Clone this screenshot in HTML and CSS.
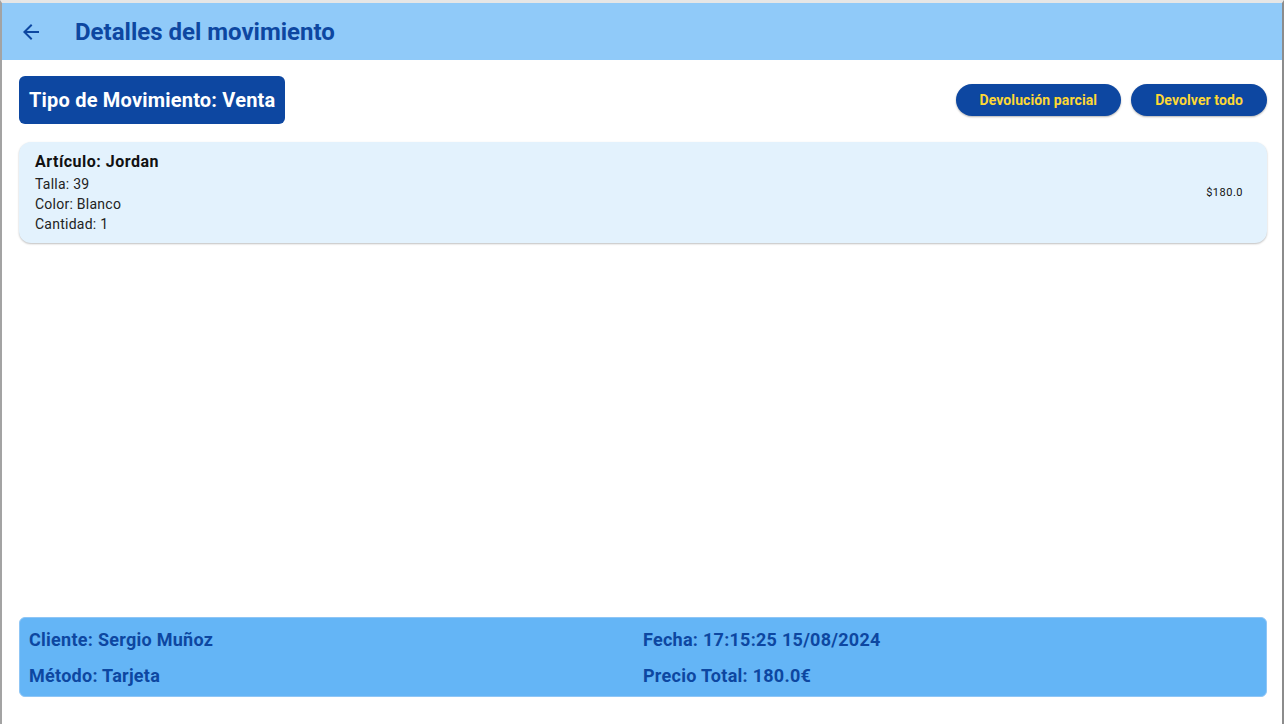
FILE: index.html
```html
<!DOCTYPE html>
<html lang="es">
<head>
<meta charset="utf-8">
<title>Detalles del movimiento</title>
<link rel="stylesheet" href="styles.css">
</head>
<body>
<div class="window">
  <header class="appbar">
    <button class="back" aria-label="Volver">
      <svg width="24" height="24" viewBox="0 0 24 24"><path d="M20 11H7.83l5.59-5.59L12 4l-8 8 8 8 1.41-1.41L7.83 13H20v-2z" fill="#0d47a1"/></svg>
    </button>
    <h1 class="title">Detalles del movimiento</h1>
  </header>
  <main class="content">
    <div class="toprow">
      <div class="tipo">Tipo de Movimiento: Venta</div>
      <div class="actions">
        <button class="pill">Devolución parcial</button>
        <button class="pill">Devolver todo</button>
      </div>
    </div>
    <div class="item">
      <div class="item-info">
        <div class="item-name">Artículo: Jordan</div>
        <div class="item-line">Talla: 39</div>
        <div class="item-line">Color: Blanco</div>
        <div class="item-line">Cantidad: 1</div>
      </div>
      <div class="item-price">$180.0</div>
    </div>
    <div class="spacer"></div>
    <div class="summary">
      <div class="sum">Cliente: Sergio Muñoz</div>
      <div class="sum">Fecha: 17:15:25 15/08/2024</div>
      <div class="sum">Método: Tarjeta</div>
      <div class="sum">Precio Total: 180.0€</div>
    </div>
  </main>
</div>
</body>
</html>
```

FILE: styles.css
```css
* { box-sizing: border-box; }
html, body { margin: 0; padding: 0; }
body {
  width: 1284px;
  height: 724px;
  overflow: hidden;
  font-family: Roboto, "Noto Sans", sans-serif;
  background: #fff;
}
.window {
  height: 724px;
  display: flex;
  flex-direction: column;
  border-top: 3px solid #e6e6e6;
  border-left: 2px solid #a3a3a3;
  border-right: 2px solid #8c8c8c;
  background: #fff;
}
.appbar {
  height: 57px;
  flex: none;
  background: #90caf9;
  display: flex;
  align-items: center;
  padding-left: 17px;
}
.back {
  border: 0;
  background: none;
  padding: 0;
  width: 24px;
  height: 24px;
  display: flex;
  margin-top: 1px;
}
.title {
  margin: 0 0 0 32px;
  font-size: 24px;
  font-weight: 700;
  color: #0d47a1;
  letter-spacing: 0;
}
.content {
  flex: 1;
  display: flex;
  flex-direction: column;
  padding: 16px 15px 27px 17px;
}
.toprow {
  display: flex;
  justify-content: space-between;
  align-items: center;
}
.tipo {
  background: #0d47a1;
  color: #fff;
  font-size: 20px;
  font-weight: 700;
  letter-spacing: 0.2px;
  height: 48px;
  display: flex;
  align-items: center;
  padding: 0 10px;
  border-radius: 6px;
}
.actions { display: flex; gap: 10px; }
.pill {
  height: 32px;
  border: 0;
  border-radius: 16px;
  background: #0d47a1;
  color: #fdd835;
  font-family: Roboto, sans-serif;
  font-size: 14px;
  font-weight: 700;
  letter-spacing: 0.1px;
  padding: 0 24px;
  box-shadow: 0 1px 2px rgba(0,0,0,0.3);
}
.item {
  margin-top: 18px;
  background: #e3f2fd;
  border-radius: 12px;
  box-shadow: 0 1px 2px rgba(0,0,0,0.25);
  display: flex;
  align-items: center;
  justify-content: space-between;
  padding: 8px 24px 9px 16px;
  height: 101px;
}
.item-name {
  font-size: 16px;
  font-weight: 700;
  color: #111;
  line-height: 22px;
  letter-spacing: 0.5px;
  margin-bottom: 1px;
}
.item-line {
  font-size: 14px;
  color: #222;
  line-height: 20px;
  letter-spacing: 0.25px;
}
.item-price {
  font-size: 11px;
  color: #111;
  letter-spacing: 0.5px;
}
.spacer { flex: 1; }
.summary {
  background: #64b5f6;
  border: 1.5px solid #8fc6f6;
  border-radius: 6px;
  display: grid;
  grid-template-columns: 1fr 1fr;
  row-gap: 0;
  padding: 5px 9px 3px;
  height: 80px;
  align-content: center;
}
.sum {
  font-size: 18px;
  font-weight: 700;
  color: #0d47a1;
  line-height: 36px;
  letter-spacing: 0.27px;
}
```
